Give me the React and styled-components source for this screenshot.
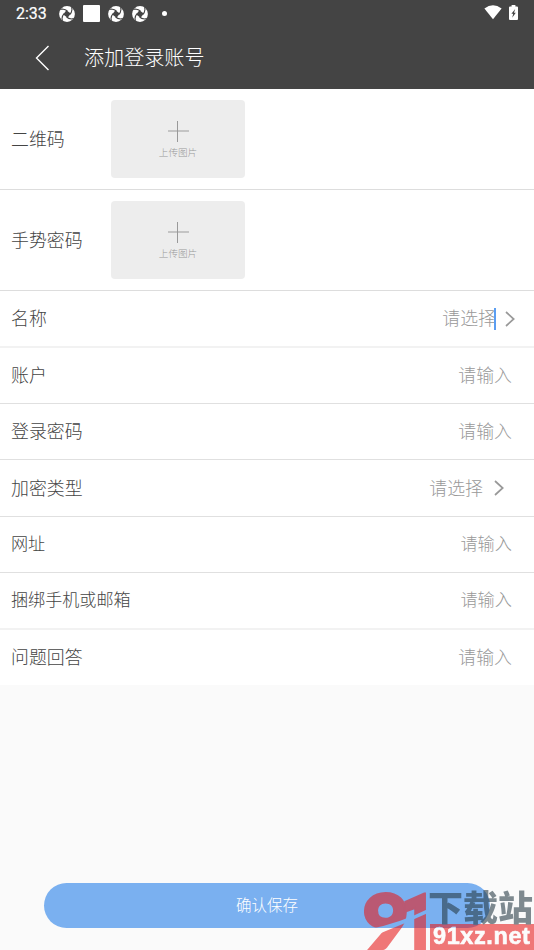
import styled, { createGlobalStyle } from 'styled-components'

const uploads = ['二维码', '手势密码']

const fields = [
	{ label: '名称', hint: '请选择', select: true, focused: true, height: 57, line: 2 },
	{ label: '账户', hint: '请输入', height: 56, line: 1 },
	{ label: '登录密码', hint: '请输入', height: 56, line: 1 },
	{ label: '加密类型', hint: '请选择', select: true, height: 57, line: 1 },
	{ label: '网址', hint: '请输入', small: true, height: 56, line: 1 },
	{ label: '捆绑手机或邮箱', hint: '请输入', small: true, height: 57, line: 2 },
	{ label: '问题回答', hint: '请输入', height: 55, line: 0 },
]

const Pinwheel = () => (
	<svg width="16" height="16" viewBox="0 0 16 16">
		<circle cx="8" cy="8" r="7.9" fill="#fff" />
		<path d="M7.4 4.2 L11.8 7.4 L8.6 11.8 L4.2 8.6 Z" fill="#444" />
		{[0, 90, 180, 270].map(angle => (
			<path
				key={angle}
				d="M8.4 5 Q6.6 3.4 3.4 3 L1.4 3.4"
				fill="none"
				stroke="#444"
				strokeWidth="1.1"
				transform={`rotate(${angle} 8 8)`}
			/>
		))}
	</svg>
)

const Wifi = () => (
	<svg width="18" height="15" viewBox="0 0 18 15">
		<path d="M0.4 3.6 Q9 -3 17.6 3.6 L9 14.2 Z" fill="#fff" />
	</svg>
)

const Battery = () => (
	<svg width="9" height="15" viewBox="0 0 9 15">
		<path d="M2.6 0 H6.4 V1.5 H8 Q9 1.5 9 2.5 V14 Q9 15 8 15 H1 Q0 15 0 14 V2.5 Q0 1.5 1 1.5 H2.6 Z" fill="#fff" />
		<path d="M6.2 4 L2.4 8.8 H4.2 L3.2 12.8 L6.8 7.8 H5 Z" fill="#444" />
	</svg>
)

const Chevron = () => (
	<svg width="10" height="16" viewBox="0 0 10 16" fill="none" stroke="#999" strokeWidth="1.7">
		<path d="M1 1 L8.7 8 L1 15" />
	</svg>
)

const Watermark = () => (
	<Mark>
		<svg width="64" height="59" viewBox="0 0 64 59">
			<defs>
				<mask id="slash" maskUnits="userSpaceOnUse" x="0" y="0" width="64" height="59">
					<rect width="64" height="59" fill="#fff" />
					<path d="M6 38 Q36 32 64 18 L64 22 Q42 32 17 42 Z" fill="#000" />
				</mask>
			</defs>
			<g mask="url(#slash)" fill="#e81d1d" stroke="#e81d1d" fontWeight="900">
				<text
					transform="translate(-1.5 58) scale(1.04 1)"
					fontFamily="Lato, sans-serif"
					fontSize="77"
					strokeWidth="3"
				>
					9
				</text>
				<text
					transform="translate(36 58) scale(.8 1)"
					fontFamily="Roboto, sans-serif"
					fontSize="77"
					strokeWidth="2"
				>
					1
				</text>
			</g>
		</svg>
		<MarkText>
			<MarkName>下载站</MarkName>
			<MarkSite>91xz.net</MarkSite>
		</MarkText>
	</Mark>
)

const App = () => {
	return (
		<>
			<GlobalStyle />
			<Page>
				<Header>
					<StatusBar>
						<Time>2:33</Time>
						<Pinwheel />
						<Square />
						<Pinwheel />
						<Pinwheel />
						<Dot />
						<StatusRight>
							<Wifi />
							<Battery />
						</StatusRight>
					</StatusBar>
					<TitleBar>
						<svg width="15" height="26" viewBox="0 0 15 26" fill="none" stroke="#fff" strokeWidth="1.4">
							<path d="M13.5 1 L1.5 13 L13.5 25" />
						</svg>
						<Title>添加登录账号</Title>
					</TitleBar>
				</Header>
				<main>
					{uploads.map(label => (
						<UploadRow key={label}>
							<UploadLabel>{label}</UploadLabel>
							<UploadBox>
								<svg width="21" height="21" viewBox="0 0 21 21">
									<path d="M0 10 H21" stroke="#c4c4c4" strokeWidth="2" />
									<path d="M9.5 0 V21" stroke="#999" strokeWidth="1" />
								</svg>
								<UploadText>上传图片</UploadText>
							</UploadBox>
						</UploadRow>
					))}
					{fields.map(el => (
						<Row key={el.label} $height={el.height} $line={el.line}>
							<Label $small={el.small}>{el.label}</Label>
							<Hint $small={el.small} $select={el.select} $focused={el.focused}>
								<span>{el.hint}</span>
								{el.focused && <Caret />}
							</Hint>
							{el.select && <Chevron />}
						</Row>
					))}
				</main>
				<Footer>
					<SaveButton>确认保存</SaveButton>
				</Footer>
				<Watermark />
			</Page>
		</>
	)
}

export default App

const GlobalStyle = createGlobalStyle`
	* {
		box-sizing: border-box;
	}
	body {
		margin: 0;
		background: #fafafa;
		font-family: "Noto Sans CJK SC", sans-serif;
		font-weight: 300;
	}
	svg {
		display: block;
		flex-shrink: 0;
	}
`
const Page = styled.div`
	position: relative;
	display: flex;
	flex-direction: column;
	width: 534px;
	height: 950px;
	overflow: hidden;
	background: #fafafa;
`
const Header = styled.header`
	height: 89px;
	background: #444;
	color: #fff;
`
const StatusBar = styled.div`
	display: flex;
	align-items: center;
	height: 27px;
	padding: 0 16px 0 16px;
	gap: 8px;
`
const Time = styled.span`
	width: 35px;
	padding-top: 1px;
	font: 400 16px/26px Roboto, sans-serif;
	-webkit-text-stroke: 0.2px #fff;
`
const Square = styled.span`
	width: 17px;
	height: 17px;
	border-radius: 1px;
	background: #fff;
`
const Dot = styled.span`
	width: 5px;
	height: 5px;
	margin-left: 6px;
	border-radius: 50%;
	background: #fff;
`
const StatusRight = styled.div`
	display: flex;
	align-items: center;
	gap: 7px;
	margin-left: auto;
	padding-bottom: 2px;
`
const TitleBar = styled.div`
	display: flex;
	align-items: center;
	height: 62px;
	padding: 0 0 0 35px;
	gap: 34px;
`
const Title = styled.h1`
	margin: 0;
	padding-bottom: 3px;
	font-size: 20.1px;
	font-weight: 300;
	line-height: 30px;
`
const UploadRow = styled.div`
	display: flex;
	align-items: center;
	height: 101px;
	padding-left: 11px;
	border-bottom: 1px solid #ddd;
	background: #fff;
`
const UploadLabel = styled.span`
	width: 100px;
	padding-bottom: 2px;
	font-size: 17.9px;
	line-height: 26px;
	color: #444;
`
const UploadBox = styled.div`
	display: flex;
	flex-direction: column;
	align-items: center;
	width: 134px;
	height: 78px;
	padding-top: 21px;
	border-radius: 4px;
	background: #ededed;
`
const UploadText = styled.span`
	margin-top: 3px;
	font-size: 9.6px;
	line-height: 14px;
	color: #999;
`
const Row = styled.div`
	display: flex;
	align-items: center;
	height: ${({ $height }) => $height}px;
	padding: 0 19px 0 11px;
	border-bottom: ${({ $line }) => $line}px solid ${({ $line }) => ($line === 2 ? '#f2f2f2' : '#e0e0e0')};
	background: #fff;
`
const Label = styled.span`
	flex: 1;
	padding-bottom: 3px;
	font-size: ${({ $small }) => ($small ? '17.1px' : '17.9px')};
	line-height: 26px;
	color: #444;
`
const Hint = styled.span`
	display: flex;
	align-items: center;
	margin-right: ${({ $select, $focused }) => ($focused ? '9px' : $select ? '11px' : '3px')};
	font-size: ${({ $small }) => ($small ? '17.2px' : '17.9px')};
	line-height: 26px;
	color: #999;
	span:first-child {
		padding-bottom: 3px;
	}
	${({ $select, $focused }) => $select && !$focused && '& + svg { margin-right: 11px; }'}
`
const Caret = styled.span`
	width: 2px;
	height: 22px;
	margin-left: -2px;
	background: #5a9ef2;
`
const Footer = styled.footer`
	margin-top: auto;
	padding: 0 44px 22px;
`
const SaveButton = styled.button`
	display: block;
	width: 100%;
	height: 45px;
	padding: 0 0 4px;
	border: 0;
	border-radius: 23px;
	background: #7ab0f0;
	color: #fff;
	font-family: inherit;
	font-size: 15.5px;
	font-weight: 300;
`
/* lies over the save button */
const Mark = styled.div`
	position: absolute;
	right: 0;
	bottom: 0;
	display: flex;
	align-items: flex-end;
	width: 170px;
	height: 59px;
	opacity: 0.59;
`
const MarkText = styled.div`
	width: 106px;
	height: 59px;
`
const MarkName = styled.div`
	height: 33px;
	font-size: 35px;
	font-weight: 900;
	line-height: 29px;
	white-space: nowrap;
	color: #283c46;
`
const MarkSite = styled.div`
	height: 26px;
	margin-left: 2px;
	padding-left: 3px;
	background: #e81d1d;
	color: #fff;
	font-family: "Liberation Sans", sans-serif;
	font-size: 23.5px;
	font-weight: 700;
	line-height: 25px;
	letter-spacing: 0.6px;
	white-space: nowrap;
	-webkit-text-stroke: 0.6px #fff;
`
